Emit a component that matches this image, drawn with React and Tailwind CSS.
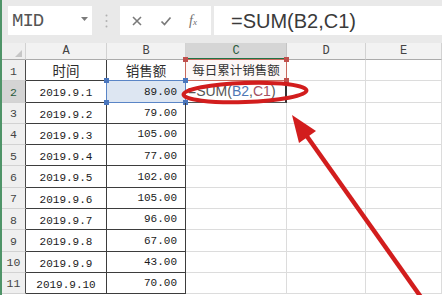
import React from "react";

const ROWS = [
  ["2019.9.1", "89.00"],
  ["2019.9.2", "79.00"],
  ["2019.9.3", "105.00"],
  ["2019.9.4", "77.00"],
  ["2019.9.5", "102.00"],
  ["2019.9.6", "105.00"],
  ["2019.9.7", "96.00"],
  ["2019.9.8", "67.00"],
  ["2019.9.9", "43.00"],
  ["2019.9.10", "70.00"],
];

const COLS = ["A", "B", "C", "D", "E"];

function Handles({ color }) {
  return (
    <>
      <span className={`absolute -left-[3px] -top-[3px] w-[5px] h-[5px] ${color}`} />
      <span className={`absolute -right-[3px] -top-[3px] w-[5px] h-[5px] ${color}`} />
      <span className={`absolute -left-[3px] -bottom-[3px] w-[5px] h-[5px] ${color}`} />
      <span className={`absolute -right-[3px] -bottom-[3px] w-[5px] h-[5px] ${color}`} />
    </>
  );
}

function FormulaBar() {
  return (
    <div className="h-[43px] shrink-0 bg-[#e9e9e9] flex items-start pt-[6px] pl-[6px]">
      {/* name box */}
      <div className="w-[84px] h-[29px] bg-white flex items-center justify-between pl-[4px] pr-[4px]">
        <span className="font-['Liberation_Mono',monospace] text-[19px] tracking-[-1px] text-[#555] leading-none pt-[2px]">
          MID
        </span>
        <svg width="7" height="4" viewBox="0 0 7 4" className="mb-[4px]">
          <polygon points="0,0 7,0 3.5,4" fill="#7b7b7b" />
        </svg>
      </div>
      {/* grip */}
      <div className="w-[28px] h-[29px] flex items-center justify-center">
        <svg width="3" height="14" viewBox="0 0 3 14">
          <circle cx="1.5" cy="1.5" r="1" fill="#b0b0b0" />
          <circle cx="1.5" cy="7" r="1" fill="#b0b0b0" />
          <circle cx="1.5" cy="12.5" r="1" fill="#b0b0b0" />
        </svg>
      </div>
      {/* cancel / enter / fx */}
      <div className="w-[91px] h-[29px] bg-white flex items-center pl-[11px] gap-[17px]">
        <svg width="12" height="12" viewBox="0 0 12 12">
          <path d="M2 2 L10 10 M10 2 L2 10" stroke="#7a7a7a" strokeWidth="1.6" />
        </svg>
        <svg width="12" height="12" viewBox="0 0 12 12">
          <path d="M1.5 6.5 L4.5 9.5 L10.5 2.5" fill="none" stroke="#7a7a7a" strokeWidth="1.7" />
        </svg>
        <span className="font-['Liberation_Serif',serif] italic text-[14px] leading-none text-[#6f6f6f]">
          f<span className="text-[9px]">x</span>
        </span>
      </div>
      {/* formula */}
      <div className="ml-[3px] flex-1 h-[29px] bg-white flex items-center pl-[17px]">
        <span className="font-['Liberation_Sans',Arial,sans-serif] text-[20px] text-[#3a3a3a] leading-none">
          =SUM(B2,C1)
        </span>
      </div>
    </div>
  );
}

function Sheet() {
  const mono = "font-['Liberation_Mono',monospace]";
  const cjk = "font-['Noto_Sans_CJK_SC',sans-serif]";
  return (
    <div className="grid grid-cols-[24px_81px_79px_101px_79px_76px] grid-rows-[17px_repeat(11,21.3px)]">
      {/* header row */}
      <div className="relative bg-[#efefef] border-r border-b border-r-[#d2d2d2] border-b-[#ababab]">
        <svg width="7" height="7" viewBox="0 0 7 7" className="absolute right-[3px] bottom-[2px]">
          <polygon points="7,0 7,7 0,7" fill="#c6c6c6" />
        </svg>
      </div>
      {COLS.map((c) =>
        c === "C" ? (
          <div
            key={c}
            className={`${mono} flex items-center justify-center text-[12px] text-[#2a5a3c] bg-[#d5d5d5] border-r border-b-2 border-r-[#c4c4c4] border-b-[#217346]`}
          >
            {c}
          </div>
        ) : (
          <div
            key={c}
            className={`${mono} flex items-center justify-center text-[12px] text-[#444] bg-[#f2f2f2] border-r border-b border-r-[#d2d2d2] border-b-[#ababab]`}
          >
            {c}
          </div>
        )
      )}

      {/* row 1 */}
      <div className={`${mono} flex items-center justify-center pt-[2px] text-[11.5px] text-[#444] bg-[#efefef] border-r border-b border-r-[#4a4a4a] border-b-[#d2d2d2]`}>
        1
      </div>
      <div className={`${cjk} flex items-center justify-center text-[13.5px] text-[#2b2b2b] border-r border-b border-[#3d3d3d]`}>
        时间
      </div>
      <div className={`${cjk} flex items-center justify-center text-[13.5px] text-[#2b2b2b] border-r border-b border-[#3d3d3d]`}>
        销售额
      </div>
      <div className={`${cjk} relative flex items-center justify-center text-[12.5px] text-[#333] bg-[#fdf8f7] border-r border-b border-[#dcdcdc]`}>
        每日累计销售额
        <span className="absolute -left-px -top-px -right-px -bottom-px border border-[#c8695c]" />
        <Handles color="bg-[#c0504d]" />
      </div>
      <div className="border-r border-b border-[#dcdcdc]" />
      <div className="border-r border-b border-[#dcdcdc]" />

      {ROWS.map(([date, amount], i) => {
        const n = i + 2;
        const selected = n === 2;
        return (
          <React.Fragment key={n}>
            <div
              className={`${mono} flex items-center justify-center pt-[2px] text-[11.5px] border-r border-b border-r-[#4a4a4a] border-b-[#d2d2d2] ${
                selected ? "bg-[#d4d4d4] text-[#2a5a3c]" : "bg-[#efefef] text-[#444]"
              }`}
            >
              {n}
            </div>
            <div className={`${mono} flex items-center justify-center pt-[4px] text-[11px] text-[#1a1a1a] border-r border-b border-[#3d3d3d]`}>
              {date}
            </div>
            <div
              className={`${mono} relative flex items-center justify-end pr-[8px] pt-[1px] text-[11px] text-[#1a1a1a] border-r border-b border-[#3d3d3d] ${
                selected ? "bg-[#dde6f2]" : ""
              }`}
            >
              {amount}
              {selected && (
                <>
                  <span className="absolute -left-px -top-px -right-px -bottom-px border-[1.5px] border-[#5a85c6]" />
                  <Handles color="bg-[#4a76bd]" />
                </>
              )}
            </div>
            {selected ? (
              <div className="flex items-center pl-[2px] whitespace-nowrap font-['Liberation_Sans',Arial,sans-serif] text-[14px] leading-none border-r-2 border-b border-r-[#333] border-b-[#555]">
                <span className="text-[#555]">=SUM(</span>
                <span className="text-[#4f78b5]">B2</span>
                <span className="text-[#555]">,</span>
                <span className="text-[#a45163]">C1</span>
                <span className="text-[#555]">)</span>
              </div>
            ) : (
              <div className="border-r border-b border-[#dcdcdc]" />
            )}
            <div className="border-r border-b border-[#dcdcdc]" />
            <div className="border-r border-b border-[#dcdcdc]" />
          </React.Fragment>
        );
      })}
    </div>
  );
}

export default function App() {
  return (
    <div className="relative w-[442px] h-[295px] overflow-hidden bg-white flex">
      <div className="w-[2px] shrink-0 bg-[#4f9468]" />
      <div className="flex-1 flex flex-col">
        <FormulaBar />
        <Sheet />
      </div>

      {/* red annotation */}
      <svg className="absolute inset-0 pointer-events-none" width="442" height="295" viewBox="0 0 442 295">
        <ellipse
          cx="245"
          cy="92.5"
          rx="61.5"
          ry="9.5"
          fill="none"
          stroke="#d21d1d"
          strokeWidth="4"
          transform="rotate(-2 245 92.5)"
        />
        <line x1="306" y1="135" x2="428" y2="307" stroke="#d21d1d" strokeWidth="4.5" />
        <polygon points="292,115 316,131 299,143" fill="#d21d1d" />
      </svg>
    </div>
  );
}
